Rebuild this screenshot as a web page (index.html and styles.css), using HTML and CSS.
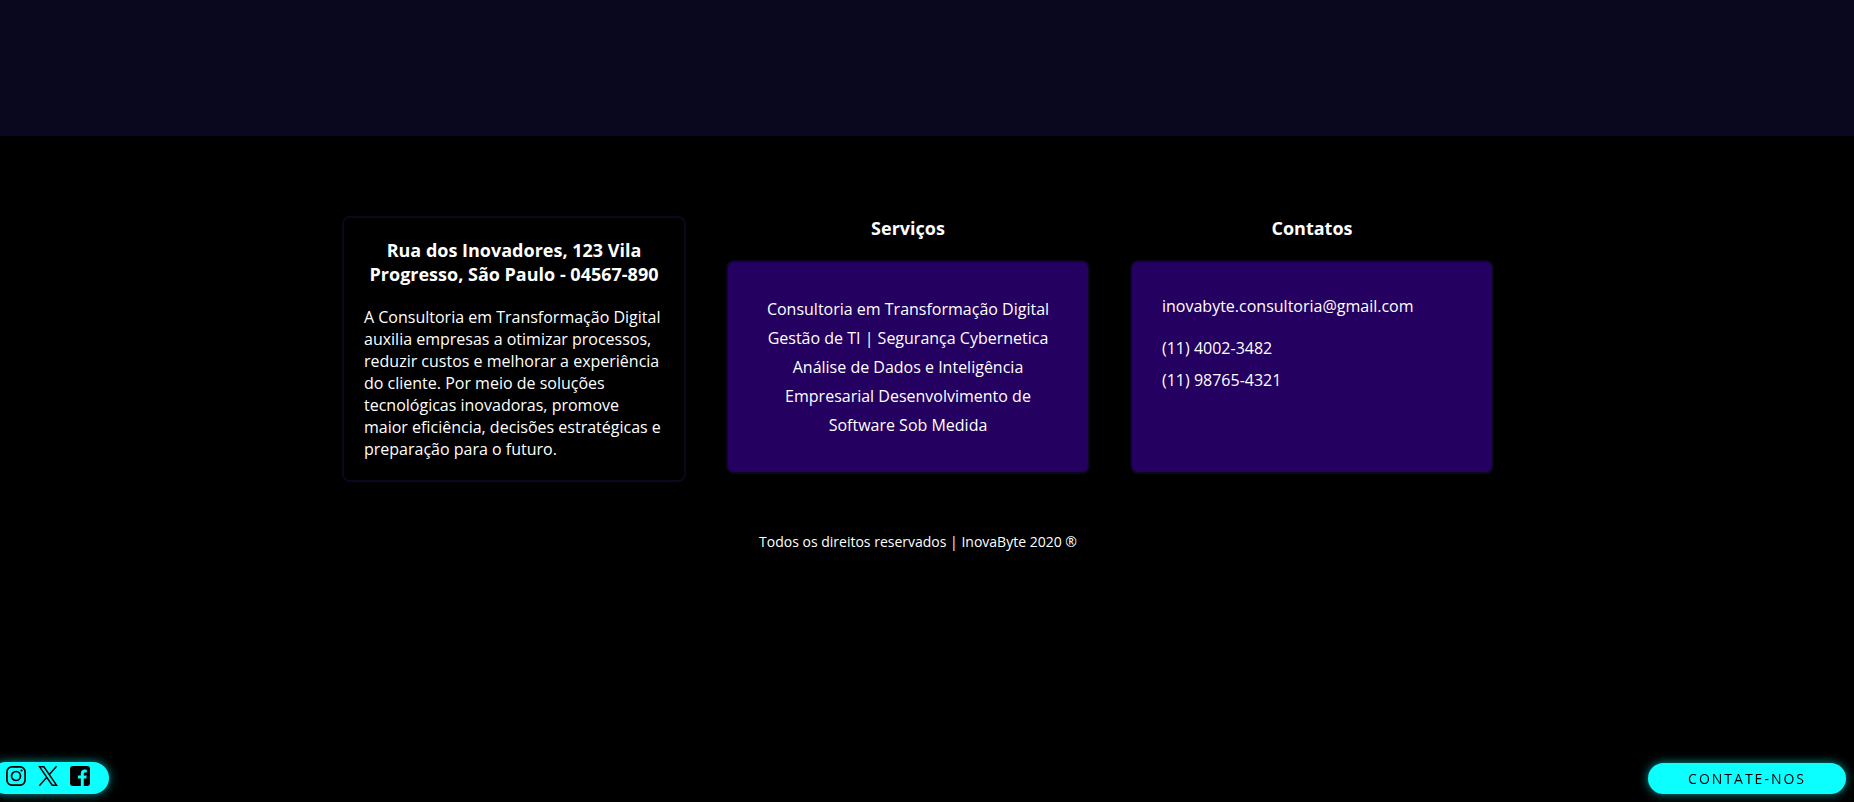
FILE: index.html
```html
<!DOCTYPE html>
<html lang="pt-BR">
<head>
<meta charset="utf-8">
<title>InovaByte</title>
<link rel="stylesheet" href="styles.css">
</head>
<body>
<section class="band"></section>
<footer class="footer">
  <div class="columns">
    <section class="about">
      <h2 class="title">Rua dos Inovadores, 123 Vila Progresso, São Paulo - 04567-890</h2>
      <p class="about-text">A Consultoria em Transformação Digital auxilia empresas a otimizar processos, reduzir custos e melhorar a experiência do cliente. Por meio de soluções tecnológicas inovadoras, promove maior eficiência, decisões estratégicas e preparação para o futuro.</p>
    </section>
    <section class="column">
      <h2 class="title">Serviços</h2>
      <div class="card">
        <p class="services">Consultoria em Transformação Digital Gestão de TI | Segurança Cybernetica Análise de Dados e Inteligência Empresarial Desenvolvimento de Software Sob Medida</p>
      </div>
    </section>
    <section class="column">
      <h2 class="title">Contatos</h2>
      <address class="card contacts">
        <a class="email" href="mailto:inovabyte.consultoria@gmail.com">inovabyte.consultoria@gmail.com</a>
        <a href="tel:+551140023482">(11) 4002-3482</a>
        <a href="tel:+5511987654321">(11) 98765-4321</a>
      </address>
    </section>
  </div>
  <p class="copyright">Todos os direitos reservados | InovaByte 2020 ®</p>
</footer>
<nav class="social" aria-label="Redes sociais">
  <a href="#" aria-label="Instagram"><svg class="icon" viewBox="0 0 20 20" fill="none" stroke="#000"><rect x=".9" y=".9" width="18.200" height="18.200" rx="5" stroke-width="1.700"/><circle cx="10" cy="10" r="4.500" stroke-width="1.700"/><circle cx="15.500" cy="4.500" r="1.100" fill="#000" stroke="none"/></svg></a>
  <a href="#" aria-label="X"><svg class="icon" viewBox="0 0 20 20" fill="none" stroke="#000" stroke-width="1.500"><path d="M1.600.8h4.300l12.600 18.400h-4.300zM18.600.3l-7.700 8.700M8.900 11.200l-7.600 8.500"/></svg></a>
  <a href="#" aria-label="Facebook"><svg class="icon" viewBox="0 0 20 20"><path fill="#000" d="M3 0h14a3 3 0 0 1 3 3v14a3 3 0 0 1-3 3h-3.200v-7.500h2.500l.4-2.900h-2.900V7.900c0-.9.400-1.500 1.500-1.500h1.500V3.800c-.5-.1-1.200-.2-2.100-.2-2.300 0-3.900 1.300-3.900 3.900v2.100H8v2.900h2.800V20H3a3 3 0 0 1-3-3V3a3 3 0 0 1 3-3z"/></svg></a>
</nav>
<button class="contact-button" type="button">CONTATE-NOS</button>
</body>
</html>
```
FILE: styles.css
```css
* {
  box-sizing: border-box;
}

body {
  margin: 0;
  min-height: 100vh;
  background: #000;
  color: #fff;
  font: 16px/22px "Open Sans", "Noto Sans", sans-serif;
}

.band {
  height: 136px;
  background: #0a081e;
}

.footer {
  padding: 80px 18px 80px 0;
}

.columns {
  display: flex;
  flex-wrap: wrap;
  justify-content: center;
  align-items: flex-start;
  gap: 40px;
}

.title {
  margin: 0 0 20px;
  font-size: 18px;
  line-height: 24px;
  font-weight: 700;
  text-align: center;
}

.about {
  width: 344px;
  padding: 20px;
  border: 2px solid #0a081e;
  border-radius: 8px;
}

.about-text {
  margin: 0;
}

.column {
  width: 364px;
}

.card {
  display: flex;
  flex-direction: column;
  min-height: 214px;
  padding: 30px;
  border: 2px solid #0a081e;
  border-radius: 8px;
  background: #240061;
}

.services {
  margin: auto 0;
  line-height: 29px;
  text-align: center;
}

.contacts {
  gap: 4px;
  align-items: flex-start;
  font-style: normal;
  line-height: 28px;
}

.contacts a {
  color: inherit;
  text-decoration: none;
}

.contacts .email {
  margin-bottom: 10px;
}

.copyright {
  margin: 49px 0 0;
  font-size: 14px;
  text-align: center;
}

.social,
.contact-button {
  position: fixed;
  bottom: 8px;
  background: #0cffff;
  border-radius: 16px;
  box-shadow: 0 0 10px rgba(12, 255, 255, 0.6);
}

.social {
  left: -10px;
  display: flex;
  gap: 12px;
  height: 32px;
  padding: 4px 19px 8px 16px;
}

.icon {
  display: block;
  width: 20px;
  height: 20px;
}

.contact-button {
  right: 8px;
  height: 31px;
  padding: 0 40px;
  border: 0;
  color: #000;
  font: 14px/20px "Open Sans", "Noto Sans", sans-serif;
  letter-spacing: 2px;
}
```
